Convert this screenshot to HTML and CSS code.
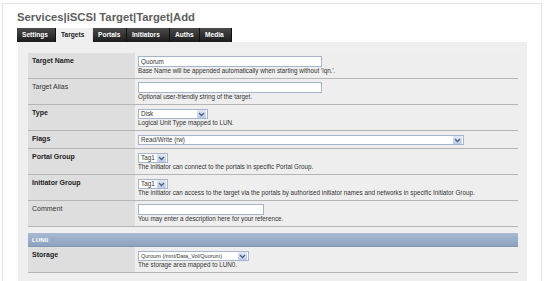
FILE: index.html
```html
<!DOCTYPE html>
<html lang="en">
<head>
    <meta charset="UTF-8">
    <title>Services|iSCSI Target|Target|Add</title>
    <link rel="stylesheet" href="styles.css">
</head>
<body>
    <div class="frame">
        <h1 class="title">Services|iSCSI Target|Target|Add</h1>

        <ul class="tabs">
            <li><a href="#">Settings</a></li>
            <li class="active"><a href="#">Targets</a></li>
            <li><a href="#">Portals</a></li>
            <li><a href="#">Initiators</a></li>
            <li><a href="#">Auths</a></li>
            <li><a href="#">Media</a></li>
        </ul>

        <div class="panel">
            <table class="form">
                <tr>
                    <td class="label strong">Target Name</td>
                    <td class="data">
                        <input type="text" class="text w-name" value="Quorum">
                        <div class="help">Base Name will be appended automatically when starting without 'iqn.'.</div>
                    </td>
                </tr>
                <tr>
                    <td class="label">Target Alias</td>
                    <td class="data">
                        <input type="text" class="text w-name" value="">
                        <div class="help">Optional user-friendly string of the target.</div>
                    </td>
                </tr>
                <tr>
                    <td class="label strong">Type</td>
                    <td class="data">
                        <span class="select w-type"><span class="value">Disk</span><span class="arrow"><svg width="7" height="5" viewBox="0 0 7 5"><path d="M1 1 L3.5 3.5 L6 1" fill="none" stroke="#4d6185" stroke-width="1.3"/></svg></span></span>
                        <div class="help">Logical Unit Type mapped to LUN.</div>
                    </td>
                </tr>
                <tr>
                    <td class="label strong">Flags</td>
                    <td class="data">
                        <span class="select w-flags"><span class="value">Read/Write (rw)</span><span class="arrow"><svg width="7" height="5" viewBox="0 0 7 5"><path d="M1 1 L3.5 3.5 L6 1" fill="none" stroke="#4d6185" stroke-width="1.3"/></svg></span></span>
                    </td>
                </tr>
                <tr>
                    <td class="label strong">Portal Group</td>
                    <td class="data">
                        <span class="select w-tag"><span class="value">Tag1</span><span class="arrow"><svg width="7" height="5" viewBox="0 0 7 5"><path d="M1 1 L3.5 3.5 L6 1" fill="none" stroke="#4d6185" stroke-width="1.3"/></svg></span></span>
                        <div class="help">The initiator can connect to the portals in specific Portal Group.</div>
                    </td>
                </tr>
                <tr>
                    <td class="label strong">Initiator Group</td>
                    <td class="data">
                        <span class="select w-tag"><span class="value">Tag1</span><span class="arrow"><svg width="7" height="5" viewBox="0 0 7 5"><path d="M1 1 L3.5 3.5 L6 1" fill="none" stroke="#4d6185" stroke-width="1.3"/></svg></span></span>
                        <div class="help">The initiator can access to the target via the portals by authorised initiator names and networks in specific Initiator Group.</div>
                    </td>
                </tr>
                <tr>
                    <td class="label">Comment</td>
                    <td class="data">
                        <input type="text" class="text w-comment" value="">
                        <div class="help">You may enter a description here for your reference.</div>
                    </td>
                </tr>
            </table>

            <table class="form lun">
                <tr>
                    <th colspan="2" class="section">LUN0</th>
                </tr>
                <tr>
                    <td class="label strong">Storage</td>
                    <td class="data">
                        <span class="select w-storage"><span class="value">Quroum (/mnt/Data_Vol/Quorum)</span><span class="arrow"><svg width="7" height="5" viewBox="0 0 7 5"><path d="M1 1 L3.5 3.5 L6 1" fill="none" stroke="#4d6185" stroke-width="1.3"/></svg></span></span>
                        <div class="help">The storage area mapped to LUN0.</div>
                    </td>
                </tr>
            </table>
        </div>
    </div>
</body>
</html>
```

FILE: styles.css
```css
body {
    margin: 0;
    padding: 0;
    background-color: #fff;
    font-family: 'Liberation Sans', Arial, sans-serif;
    color: #222;
}
.frame {
    margin: 3px 2px 0 2px;
    height: 278px;
    box-sizing: border-box;
    border: 1px solid #e3e3e3;
    border-bottom: none;
    padding: 0 14px 0 14px;
    overflow: hidden;
}
.title {
    margin: 0;
    padding-top: 7px;
    height: 17px;
    font-size: 11.3px;
    line-height: 12px;
    font-weight: bold;
    color: #606060;
}

/* Tabs */
.tabs {
    list-style: none;
    margin: 0;
    padding: 0;
    display: flex;
    height: 14px;
}
.tabs li {
    background: linear-gradient(#4a4a4a, #1c1c1c);
    border-right: 1px solid #111;
}
.tabs li a {
    display: block;
    padding: 0 5px;
    line-height: 14px;
    font-size: 6.6px;
    font-weight: bold;
    color: #fff;
    text-decoration: none;
}
.tabs li:nth-child(1) a { width: 28px; }
.tabs li:nth-child(2) a { width: 26px; }
.tabs li:nth-child(3) a { width: 23px; }
.tabs li:nth-child(4) a { width: 32px; }
.tabs li:nth-child(5) a { width: 19px; }
.tabs li:nth-child(6) a { width: 21px; }
.tabs li.active {
    background: #efefef;
    border-right: 1px solid #e0e0e0;
}
.tabs li.active a {
    color: #222;
}

/* Content panel */
.panel {
    background-color: #efefef;
    margin-left: 1px;
    padding: 11px 9px 0 10px;
    height: 240px;
}
.form {
    width: 490px;
    border-collapse: collapse;
}
.form td {
    border-bottom: 1px solid #b5b5b5;
    vertical-align: top;
}
.label {
    width: 103px;
    background-color: #dedede;
    padding: 4px 0 0 4px;
    font-size: 7px;
    line-height: 8px;
    color: #333;
}
.label.strong {
    font-weight: bold;
    color: #222;
}
.data {
    background-color: #eee;
    padding: 3px 0 3px 3px;
    font-size: 0;
}
.help {
    font-size: 6.3px;
    line-height: 8px;
    color: #333;
    white-space: nowrap;
}
.lun {
    margin-top: 6px;
}
.section {
    height: 13px;
    padding: 0 0 0 4px;
    text-align: left;
    background: linear-gradient(#a9bbd2, #8ca2bf);
    border-bottom: 1px solid #7f96b5;
    font-size: 6.2px;
    font-weight: bold;
    color: #fff;
}

/* Form controls */
.text {
    box-sizing: border-box;
    height: 11px;
    margin: 0;
    padding: 0 2px;
    border: 1px solid #a5b6cc;
    background: #fff;
    font-family: inherit;
    font-size: 6.3px;
    color: #333;
    vertical-align: top;
}
.w-name { width: 184px; }
.w-comment { width: 126px; }

.select {
    display: inline-flex;
    align-items: center;
    box-sizing: border-box;
    height: 10px;
    margin-top: 1px;
    border: 1px solid #a5b6cc;
    background: #fff;
    vertical-align: top;
}
.select .value {
    flex: 1;
    overflow: hidden;
    padding-left: 2px;
    font-size: 6.3px;
    line-height: 8px;
    color: #333;
    white-space: nowrap;
}
.select .arrow {
    display: flex;
    align-items: center;
    justify-content: center;
    width: 9px;
    height: 8px;
    margin-right: 1px;
    background: linear-gradient(#dfe8f6, #b9cbe6);
    border-radius: 1px;
}
.w-type { width: 70px; }
.w-flags { width: 326px; }
.w-tag { width: 30px; }
.w-storage { width: 111px; }
.w-storage .value {
    font-size: 5.5px;
}
```
